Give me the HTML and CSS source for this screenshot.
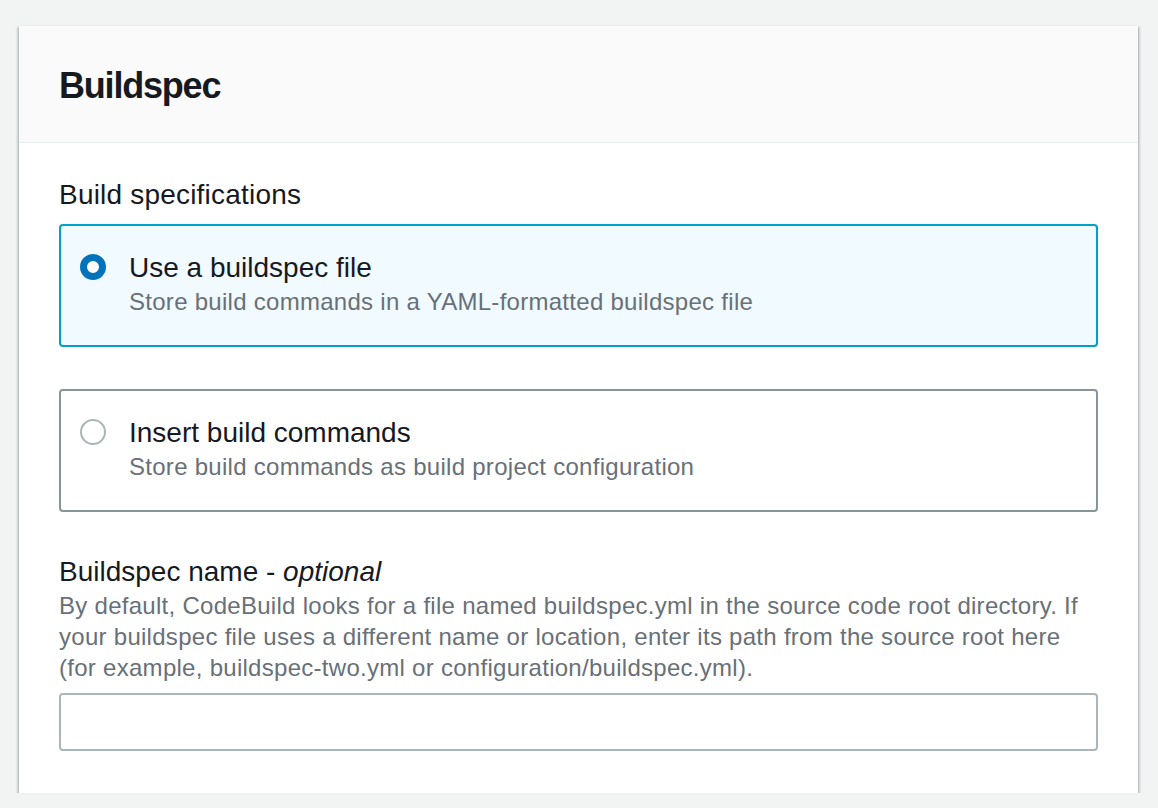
FILE: index.html
```html
<!DOCTYPE html>
<html lang="en">
<head>
<meta charset="utf-8">
<title>Buildspec</title>
<link rel="stylesheet" href="styles.css">
</head>
<body>
<div class="page">
  <section class="panel">
    <header class="panel-header">
      <h2 class="panel-title">Buildspec</h2>
    </header>
    <div class="panel-body">
      <div class="field-label">Build specifications</div>
      <div class="tiles">
        <label class="tile tile-selected">
          <input class="radio" type="radio" name="spec" checked>
          <span class="tile-text">
            <span class="tile-label">Use a buildspec file</span>
            <span class="tile-desc">Store build commands in a YAML-formatted buildspec file</span>
          </span>
        </label>
        <label class="tile">
          <input class="radio" type="radio" name="spec">
          <span class="tile-text">
            <span class="tile-label">Insert build commands</span>
            <span class="tile-desc">Store build commands as build project configuration</span>
          </span>
        </label>
      </div>
      <div class="field">
        <div class="field-name">Buildspec name - <em>optional</em></div>
        <div class="field-help">By default, CodeBuild looks for a file named buildspec.yml in the source code root directory. If your buildspec file uses a different name or location, enter its path from the source root here (for example, buildspec-two.yml or configuration/buildspec.yml).</div>
        <input class="text-input" type="text">
      </div>
    </div>
  </section>
</div>
</body>
</html>
```
FILE: styles.css
```css
html, body {
  margin: 0;
  padding: 0;
}
body {
  background: #f2f3f3;
  font-family: "Liberation Sans", Arial, sans-serif;
  color: #16191f;
}
.page {
  padding: 25px 20px 0 19px;
}
.panel {
  width: 1119px;
  background: #ffffff;
  border-top: 1px solid #eaeded;
  box-shadow: 0 2px 2px 0 rgba(0, 28, 36, 0.3), 2px 2px 2px 0 rgba(0, 28, 36, 0.15), -2px 2px 2px 0 rgba(0, 28, 36, 0.15);
}
.panel-header {
  background: #fafafa;
  border-bottom: 1px solid #eaeded;
  padding: 38px 40px 34px;
}
.panel-title {
  margin: 0;
  font-size: 36px;
  line-height: 44px;
  font-weight: 700;
  letter-spacing: -1.2px;
  color: #16191f;
}
.panel-body {
  padding: 30px 40px 42px;
}
.field-label {
  font-size: 28px;
  line-height: 44px;
  letter-spacing: 0.2px;
  margin-bottom: 7px;
}
.tiles {
  display: flex;
  flex-direction: column;
  gap: 42px;
}
.tile {
  display: flex;
  align-items: flex-start;
  gap: 23px;
  border: 2px solid #879596;
  border-radius: 4px;
  padding: 23px 20px 27px 19px;
  background: #ffffff;
  cursor: pointer;
}
.tile-selected {
  border-color: #00a1c9;
  background: #f1faff;
}
.radio {
  appearance: none;
  -webkit-appearance: none;
  margin: 5px 0 0;
  width: 26px;
  height: 26px;
  flex: none;
  border-radius: 50%;
  border: 2px solid #aab7b8;
  background: #ffffff;
  box-sizing: border-box;
}
.radio:checked {
  border: 7px solid #0073bb;
  background: #ffffff;
}
.tile-text {
  display: flex;
  flex-direction: column;
}
.tile-label {
  font-size: 28px;
  line-height: 37px;
  color: #16191f;
}
.tile-desc {
  font-size: 24px;
  line-height: 32px;
  letter-spacing: 0.28px;
  color: #687078;
}
.field {
  margin-top: 44px;
}
.field-name {
  font-size: 28px;
  line-height: 32px;
  color: #16191f;
}
.field-help {
  margin-top: 2px;
  font-size: 24px;
  line-height: 31px;
  letter-spacing: 0.28px;
  color: #687078;
}
.text-input {
  display: block;
  box-sizing: border-box;
  margin-top: 10px;
  width: 100%;
  height: 58px;
  border: 2px solid #aab7b8;
  border-radius: 4px;
  background: #ffffff;
  font-family: inherit;
  font-size: 28px;
  padding: 0 20px;
  outline: none;
}
```
